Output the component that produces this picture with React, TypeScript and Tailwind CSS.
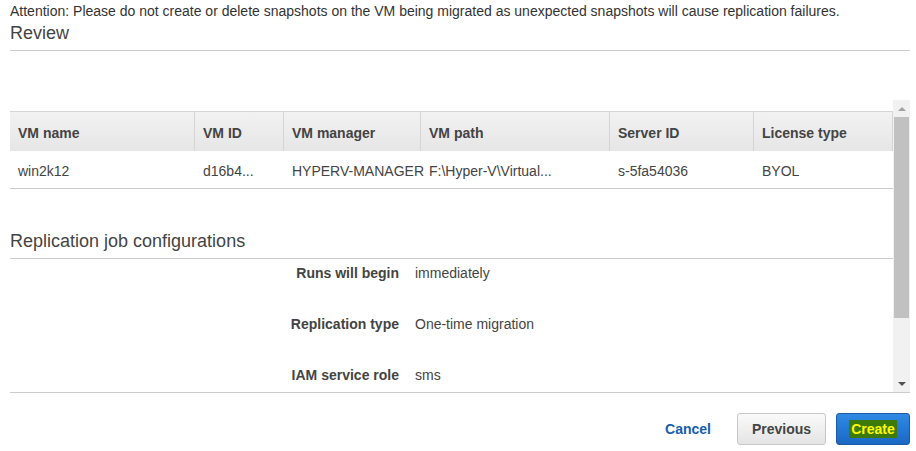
import React from "react";

const columns = [
  { label: "VM name", width: "w-[184px]", value: "win2k12" },
  { label: "VM ID", width: "w-[89px]", value: "d16b4..." },
  { label: "VM manager", width: "w-[137px]", value: "HYPERV-MANAGER" },
  { label: "VM path", width: "w-[189px]", value: "F:\\Hyper-V\\Virtual..." },
  { label: "Server ID", width: "w-[144px]", value: "s-5fa54036" },
  { label: "License type", width: "flex-1", value: "BYOL" },
];

const settings = [
  { label: "Runs will begin", value: "immediately" },
  { label: "Replication type", value: "One-time migration" },
  { label: "IAM service role", value: "sms" },
];

function ScrollBar() {
  return (
    <div className="w-[17px] shrink-0 bg-[#f1f1f1] flex flex-col items-center">
      <div className="h-[17px] flex items-center justify-center">
        <div className="w-0 h-0 border-l-[4px] border-r-[4px] border-b-[4px] border-l-transparent border-r-transparent border-b-[#a3a3a3]" />
      </div>
      <div className="w-[15px] h-[201px] bg-[#c1c1c1]" />
      <div className="flex-1" />
      <div className="h-[17px] flex items-center justify-center">
        <div className="w-0 h-0 border-l-[4px] border-r-[4px] border-t-[4px] border-l-transparent border-r-transparent border-t-[#505050]" />
      </div>
    </div>
  );
}

export default function App() {
  return (
    <div
      className="w-[916px] h-[451px] bg-white text-[#444] pl-[10px] pr-[6px] overflow-hidden"
      style={{ fontFamily: '"Liberation Sans", Arial, sans-serif' }}
    >
      <p className="text-[14px] leading-[16px] pt-[3px] text-[#333]">
        Attention: Please do not create or delete snapshots on the VM being migrated as unexpected
        snapshots will cause replication failures.
      </p>
      <h2 className="text-[18px] leading-[22px] pt-[3px] pb-[6px] border-b border-[#ccc] text-[#444]">
        Review
      </h2>

      <div className="mt-[49px] h-[293px] flex border-b border-[#ccc]">
        <div className="flex-1 pt-[11px] overflow-hidden">
          <div className="flex h-[40px] border-t border-r border-[#d5d5d5] bg-gradient-to-b from-[#f2f2f2] to-[#e6e6e6] text-[14px] font-bold text-[#444]">
            {columns.map((c, i) => (
              <div
                key={c.label}
                className={`${c.width} ${i > 0 ? "border-l border-[#d5d5d5]" : ""} pl-[8px] pt-[11px]`}
              >
                {c.label}
              </div>
            ))}
          </div>
          <div className="flex h-[38px] border-b border-[#ccc] text-[14px] text-[#444]">
            {columns.map((c, i) => (
              <div
                key={c.label}
                className={`${c.width} ${i > 0 ? "pl-[9px]" : "pl-[8px]"} pt-[10px] whitespace-nowrap`}
              >
                {c.value}
              </div>
            ))}
          </div>

          <h3 className="mt-[41px] text-[18px] leading-[22px] pb-[6px] border-b border-[#ccc] text-[#444]">
            Replication job configurations
          </h3>
          <div className="text-[14px]">
            {settings.map((s, i) => (
              <div key={s.label} className={`flex ${i === 0 ? "pt-[6px]" : "pt-[35px]"} leading-[16px]`}>
                <div className="w-[389px] text-right font-bold text-[#444]">{s.label}</div>
                <div className="pl-[16px] text-[#444]">{s.value}</div>
              </div>
            ))}
          </div>
        </div>
        <ScrollBar />
      </div>

      <div className="flex items-center justify-end mt-[20px] text-[14px] font-bold">
        <button className="text-[#1560b0] mr-[26px]">Cancel</button>
        <button className="w-[89px] h-[32px] rounded-[3px] border border-[#c8c8c8] bg-gradient-to-b from-[#fafafa] to-[#e4e4e4] text-[#444] mr-[10px]">
          Previous
        </button>
        <button className="w-[74px] h-[32px] rounded-[3px] border border-[#1b5aa5] bg-gradient-to-b from-[#2f8ae4] to-[#1a68c4] flex items-center justify-center">
          <span className="bg-[#3c7a0c] text-[#ffff00] px-[2px] leading-[18px]">Create</span>
        </button>
      </div>
    </div>
  );
}
